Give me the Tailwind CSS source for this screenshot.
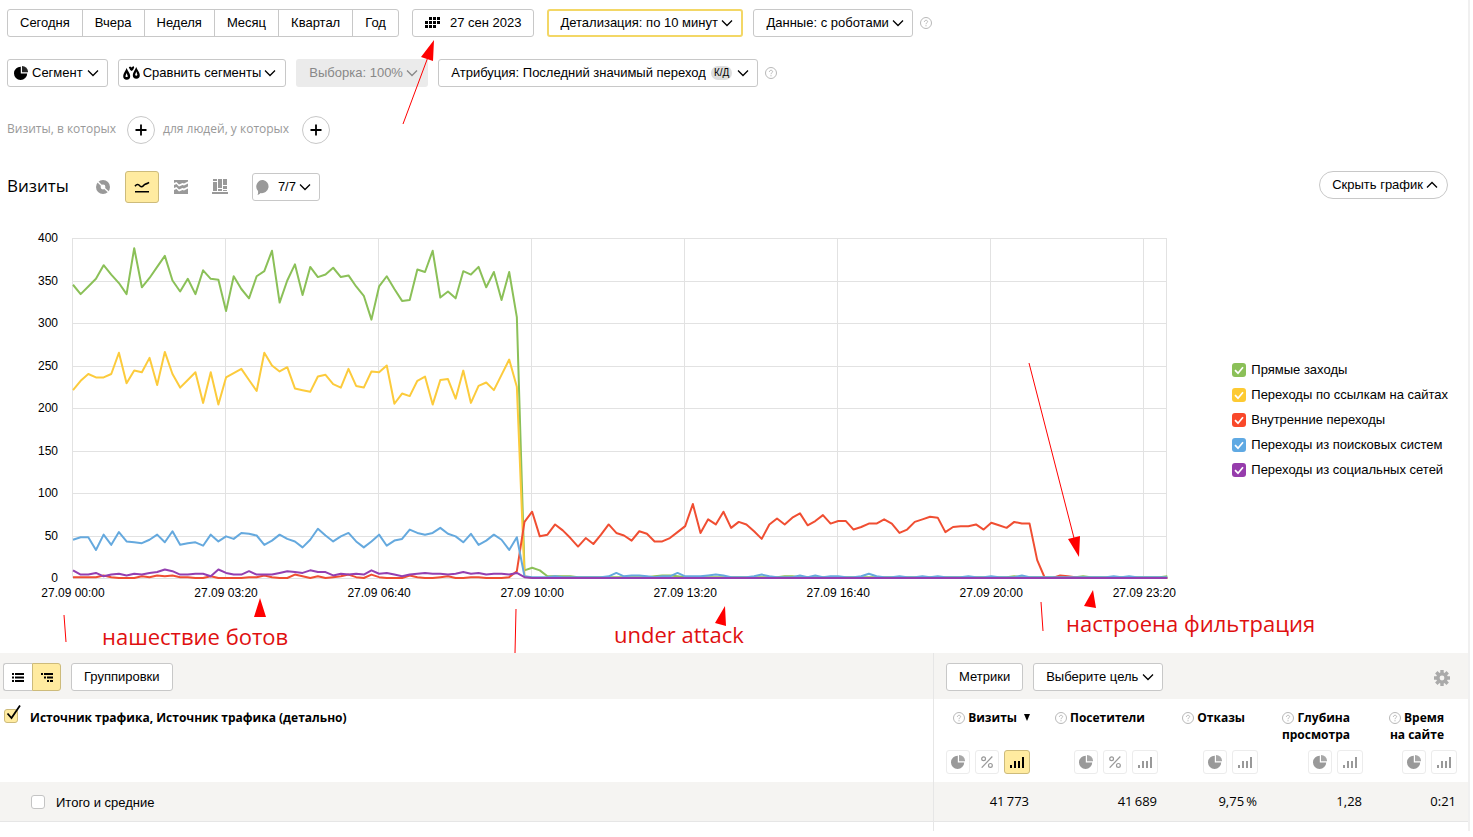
<!DOCTYPE html>
<html lang="ru">

<head>
  <meta charset="UTF-8">
  <meta name="viewport" content="width=device-width, initial-scale=1">
  <title>Источники, сводка</title>
  <script src="https://cdn.jsdelivr.net/npm/@tailwindcss/browser@4"></script>
</head>

<body class="bg-white text-black text-[13px] font-['Liberation_Sans',Arial,sans-serif]">

  <!-- Icons -->
  <svg class="hidden">
    <symbol id="down" viewBox="0 0 12 8">
      <path d="M1 1.5 L6 6.5 L11 1.5" fill="none" stroke="currentColor" stroke-width="1.3" />
    </symbol>
    <symbol id="help" viewBox="0 0 12 12">
      <circle cx="6" cy="6" r="5.5" fill="none" stroke="currentColor" />
      <path d="M4.4 4.9 C4.4 2.8 7.6 2.8 7.6 4.7 C7.6 5.8 6 5.8 6 7.2 M6 8.2 V9.3" fill="none" stroke="currentColor" />
    </symbol>
    <symbol id="pie" viewBox="0 0 14 14">
      <path d="M6.8 0.8 A6.6 6.6 0 1 0 13.2 7.4 H6.8 Z" fill="currentColor" />
      <path d="M8 0 A6 6 0 0 1 14 6.3 H8 Z" fill="currentColor" opacity="0.85" />
    </symbol>
    <symbol id="percent" viewBox="0 0 12 12">
      <g fill="none" stroke="currentColor" stroke-width="1.2">
        <circle cx="2.6" cy="2.8" r="1.9" />
        <circle cx="9.4" cy="9.4" r="1.9" />
        <path d="M11.3 0.5 L0.7 11.7" />
      </g>
    </symbol>
    <symbol id="bars" viewBox="0 0 14 12">
      <path d="M0 9h2v3H0z M4 5h2v7H4z M8 5h2v7H8z M12 1h2v11h-2z" fill="currentColor" />
    </symbol>
    <symbol id="tick" viewBox="0 0 14 14">
      <path d="M3 7.2 L6 10.2 L11 4.2" fill="none" stroke="#fff" stroke-width="1.7" />
    </symbol>
  </svg>

  <div class="relative mr-[3px] border-r-2 border-[#f0f0f0]">

    <!-- Period -->
    <div class="flex items-center pt-[9px] pl-[7px]">
      <div class="flex h-7 rounded-[3px] border border-[#c8c8c8] divide-x divide-[#c8c8c8]">
        <button class="px-3">Сегодня</button>
        <button class="px-3">Вчера</button>
        <button class="px-3">Неделя</button>
        <button class="px-3">Месяц</button>
        <button class="px-3">Квартал</button>
        <button class="px-3">Год</button>
      </div>
      <button class="ml-[13px] flex h-7 items-center gap-[9px] rounded-[3px] border border-[#c8c8c8] px-3">
        <svg class="h-3 w-4" viewBox="0 0 16 12">
          <path d="M4 0h3v3H4z M8 0h3v3H8z M12 0h3v3h-3z M0 4h3v3H0z M4 4h3v3H4z M8 4h3v3H8z M12 4h3v3h-3z M0 8h3v3H0z M4 8h3v3H4z M8 8h3v3H8z" />
        </svg>
        27 сен 2023
      </button>
      <div class="relative ml-[13px]">
        <select aria-label="Детализация" class="block h-7 appearance-none rounded-[3px] border-2 border-[#f3d766] bg-white pr-[23px] pl-[11px]">
          <option>Детализация: по 10 минут</option>
        </select>
        <svg class="pointer-events-none absolute top-[10px] right-[10px] h-2 w-3"><use href="#down" /></svg>
      </div>
      <div class="relative ml-[10px]">
        <select aria-label="Данные" class="block h-7 appearance-none rounded-[3px] border border-[#c8c8c8] bg-white pr-[23px] pl-3">
          <option>Данные: с роботами</option>
        </select>
        <svg class="pointer-events-none absolute top-[10px] right-[9px] h-2 w-3"><use href="#down" /></svg>
      </div>
      <svg class="ml-[7px] h-3 w-3 text-[#b8b8b8]"><use href="#help" /></svg>
    </div>

    <!-- Segments -->
    <div class="mt-[22px] flex items-center pl-[7px]">
      <button class="flex h-7 items-center gap-1 rounded-[3px] border border-[#c8c8c8] pr-2 pl-[6px]">
        <svg class="h-[14px] w-[14px]"><use href="#pie" /></svg>
        Сегмент
        <svg class="h-2 w-3"><use href="#down" /></svg>
      </button>
      <button class="ml-[10px] flex h-7 items-center gap-[3px] rounded-[3px] border border-[#c8c8c8] pr-[9px] pl-1">
        <svg class="h-[14px] w-[17px]" viewBox="0 0 17 14">
          <path d="M3.6 2 C4.4 4.8 7.2 7 7.2 10 A3.5 3.8 0 0 1 0.2 10 C0.2 7 2.8 4.8 3.6 2 Z M13.2 1 C14 3.8 16.8 6 16.8 9 A3.5 3.8 0 0 1 9.8 9 C9.8 6 12.4 3.8 13.2 1 Z M5.8 1.2 L7.2 0.4 L8.6 1.4 L10.4 0 L11.2 1.4 L10 4 L8.6 5 L7.2 4 Z" />
          <path d="M3.6 7 L4.8 10.2 A1.3 1.4 0 0 1 2.4 10.2 Z M13.3 5.4 L14.4 8.8 A1.2 1.4 0 0 1 12.1 8.8 Z" fill="#fff" />
        </svg>
        Сравнить сегменты
        <svg class="h-2 w-3"><use href="#down" /></svg>
      </button>
      <div class="relative ml-[10px]">
        <select aria-label="Выборка" disabled class="block h-7 appearance-none rounded-[3px] bg-[#ebebeb] pr-[25px] pl-[13px] text-[#888] disabled:opacity-100">
          <option>Выборка: 100%</option>
        </select>
        <svg class="pointer-events-none absolute top-[10px] right-[10px] h-2 w-3 text-[#888]"><use href="#down" /></svg>
      </div>
      <div class="relative ml-[10px]">
        <select aria-label="Атрибуция" class="block h-7 appearance-none rounded-[3px] border border-[#c8c8c8] bg-white pr-[51px] pl-3">
          <option>Атрибуция: Последний значимый переход</option>
        </select>
        <div class="pointer-events-none absolute inset-y-0 right-[9px] flex items-center gap-[5px]">
          <span class="rounded-full bg-[#ddd] px-[3px] text-[10px] leading-[14px]">К/Д</span>
          <svg class="h-2 w-3"><use href="#down" /></svg>
        </div>
      </div>
      <svg class="ml-[7px] h-3 w-3 text-[#b8b8b8]"><use href="#help" /></svg>
    </div>

    <!-- Conditions -->
    <div class="mt-[29px] flex items-center pl-[7px] font-['Open_Sans',sans-serif] text-xs text-[#999]">
      <span class="pb-[2px]">Визиты, в которых</span>
      <button aria-label="Добавить условие" class="mr-2 ml-[11px] flex h-7 w-7 items-center justify-center rounded-full border border-[#c8c8c8] text-black">
        <svg class="h-3 w-3" viewBox="0 0 12 12"><path d="M6 0.5V11.5 M0.5 6H11.5" stroke="currentColor" stroke-width="1.8" /></svg>
      </button>
      <span class="pb-[2px]">для людей, у которых</span>
      <button aria-label="Добавить условие для людей" class="ml-[13px] flex h-7 w-7 items-center justify-center rounded-full border border-[#c8c8c8] text-black">
        <svg class="h-3 w-3" viewBox="0 0 12 12"><path d="M6 0.5V11.5 M0.5 6H11.5" stroke="currentColor" stroke-width="1.8" /></svg>
      </button>
    </div>

    <!-- Chart toolbar -->
    <div class="mt-[27px] flex h-8 items-center pr-5 pl-[7px]">
      <h1 class="pb-[2px] font-['Open_Sans',sans-serif] text-[17px] leading-[30px]">Визиты</h1>
      <div class="ml-[17px] flex h-8 items-center gap-[5px] text-[#999]">
        <button aria-label="Круговая диаграмма" class="flex h-8 w-[34px] items-center justify-center">
          <svg class="h-[14px] w-[14px]" viewBox="0 0 14 14">
            <circle cx="7" cy="7" r="7" fill="currentColor" />
            <circle cx="7" cy="7" r="2.4" fill="#fff" />
            <path d="M7 7 L1.5 1.5 M7 7 L12.5 12" stroke="#fff" stroke-width="1.4" />
          </svg>
        </button>
        <button aria-label="Линии" class="flex h-8 w-[34px] items-center justify-center rounded-[3px] border border-[#cdbb7b] bg-[#ffeba0] text-black">
          <svg class="h-3 w-4" viewBox="0 0 16 12">
            <path d="M1 5.2 C3 2.6 4.6 3.4 6 5 C7.6 6.6 9 5.4 10.5 3.6 C11.8 2.6 13 3.2 15 1.4 M1 10.7 H15" fill="none" stroke="currentColor" stroke-width="1.6" />
          </svg>
        </button>
        <button aria-label="Области" class="flex h-8 w-[34px] items-center justify-center">
          <svg class="h-[14px] w-[14px]" viewBox="0 0 14 14" fill="currentColor">
            <path d="M0 0H14V1.5L10 3.5L8.5 3L5 4.5L2.5 2L0 3Z" />
            <path d="M0 5L2.5 4L5 6.5L8.5 5L10 5.5L14 3.5V6.5L10 8.5L8.5 8L5 9.5L2.5 7L0 8Z" />
            <path d="M0 10L2.5 9L5 11.5L8.5 10L10 10.5L14 8.5V14H0Z" />
          </svg>
        </button>
        <button aria-label="Колонки" class="flex h-8 w-[34px] items-center justify-center">
          <svg class="h-4 w-4" viewBox="0 0 16 16" fill="currentColor">
            <path d="M1 0h4v2H1z M1 3h4v9H1z M6 0h4v9H6z M6 10h4v2H6z M11 0h4v6h-4z M11 7h4v3h-4z M11 11h4v1h-4z M0 13h16v2H0z" />
          </svg>
        </button>
      </div>
      <div class="relative ml-[15px]">
        <select aria-label="Линии графика" class="block h-7 appearance-none rounded-[3px] border border-[#c8c8c8] bg-white pr-[22px] pl-[25px]">
          <option>7/7</option>
        </select>
        <svg class="pointer-events-none absolute top-[7px] left-1 h-[15px] w-[14px]" viewBox="0 0 14 15">
          <path d="M7.2 0 A6.6 6.6 0 1 1 4.6 13 C3.8 14 2.4 14.8 1.4 14.8 C2.2 13.8 2.2 12.4 2 11 A6.6 6.6 0 0 1 7.2 0 Z" fill="#999" />
        </svg>
        <svg class="pointer-events-none absolute top-[10px] right-[9px] h-2 w-3"><use href="#down" /></svg>
      </div>
      <button class="mb-1 ml-auto flex h-7 items-center gap-[3px] rounded-full border border-[#c8c8c8] pr-[9px] pl-3">
        Скрыть график
        <svg class="h-2 w-3 rotate-180"><use href="#down" /></svg>
      </button>
    </div>

    <!-- Chart -->
    <div class="flex h-[450px] pt-[35px] pr-5 pl-[73px]">
      <div class="min-w-0 flex-1">
        <svg class="block h-[341px] w-full overflow-visible text-xs" role="img" aria-label="Визиты по источникам трафика">
          <g id="grid" stroke="#e2e2e2" shape-rendering="crispEdges" transform="translate(-0.5 0)"></g>
          <g id="labels"></g>
          <svg id="lines" class="overflow-visible" width="100%" height="341" viewBox="0 0 143 341" preserveAspectRatio="none"></svg>
        </svg>
      </div>
      <ul class="mt-[122px] ml-[65px] flex shrink-0 flex-col gap-[5px]">
        <li><label class="flex h-5 items-center gap-[5px]">
          <span class="grid"><input type="checkbox" checked class="col-start-1 row-start-1 h-[14px] w-[14px] appearance-none rounded-[3px] bg-[#8bc058]"><svg class="pointer-events-none col-start-1 row-start-1 h-[14px] w-[14px]"><use href="#tick" /></svg></span>
          <span class="leading-5">Прямые заходы</span></label></li>
        <li><label class="flex h-5 items-center gap-[5px]">
          <span class="grid"><input type="checkbox" checked class="col-start-1 row-start-1 h-[14px] w-[14px] appearance-none rounded-[3px] bg-[#fdca32]"><svg class="pointer-events-none col-start-1 row-start-1 h-[14px] w-[14px]"><use href="#tick" /></svg></span>
          <span class="leading-5">Переходы по ссылкам на сайтах</span></label></li>
        <li><label class="flex h-5 items-center gap-[5px]">
          <span class="grid"><input type="checkbox" checked class="col-start-1 row-start-1 h-[14px] w-[14px] appearance-none rounded-[3px] bg-[#f9482a]"><svg class="pointer-events-none col-start-1 row-start-1 h-[14px] w-[14px]"><use href="#tick" /></svg></span>
          <span class="leading-5">Внутренние переходы</span></label></li>
        <li><label class="flex h-5 items-center gap-[5px]">
          <span class="grid"><input type="checkbox" checked class="col-start-1 row-start-1 h-[14px] w-[14px] appearance-none rounded-[3px] bg-[#5fa9e3]"><svg class="pointer-events-none col-start-1 row-start-1 h-[14px] w-[14px]"><use href="#tick" /></svg></span>
          <span class="leading-5">Переходы из поисковых систем</span></label></li>
        <li><label class="flex h-5 items-center gap-[5px]">
          <span class="grid"><input type="checkbox" checked class="col-start-1 row-start-1 h-[14px] w-[14px] appearance-none rounded-[3px] bg-[#963cac]"><svg class="pointer-events-none col-start-1 row-start-1 h-[14px] w-[14px]"><use href="#tick" /></svg></span>
          <span class="leading-5">Переходы из социальных сетей</span></label></li>
      </ul>
    </div>

    <!-- Table toolbar -->
    <div class="flex h-[46px] bg-[#f5f4f2]">
      <div class="flex flex-1 items-start pt-[10px] pl-[3px]">
        <div class="flex h-7">
          <button aria-label="Список" class="flex w-[29px] items-center justify-center rounded-l-[3px] border border-r-0 border-[#c8c8c8] bg-white">
            <svg class="h-[9px] w-3" viewBox="0 0 12 9"><path d="M0 0h2v2H0z M3 0h9v2H3z M0 3.5h2v2H0z M3 3.5h9v2H3z M0 7h2v2H0z M3 7h9v2H3z" /></svg>
          </button>
          <button aria-label="Дерево" class="flex w-[29px] items-center justify-center rounded-r-[3px] border border-[#cdbb7b] bg-[#ffeba0]">
            <svg class="h-[9px] w-3" viewBox="0 0 12 9"><path d="M0 0h2v2H0z M3 0h9v2H3z M3 3.5h2v2H3z M6 3.5h6v2H6z M6 7h2v2H6z M9 7h3v2H9z" /></svg>
          </button>
        </div>
        <button class="ml-[10px] h-7 rounded-[3px] border border-[#c8c8c8] bg-white px-3">Группировки</button>
      </div>
      <div class="flex w-[535px] items-start border-l border-[#e6e6e6] pt-[10px] pr-[18px] pl-3">
        <button class="h-7 rounded-[3px] border border-[#c8c8c8] bg-white px-3">Метрики</button>
        <div class="relative ml-[10px]">
          <select aria-label="Цель" class="block h-7 appearance-none rounded-[3px] border border-[#c8c8c8] bg-white pr-[23px] pl-3">
            <option>Выберите цель</option>
          </select>
          <svg class="pointer-events-none absolute top-[10px] right-[9px] h-2 w-3"><use href="#down" /></svg>
        </div>
        <button aria-label="Настройки" class="mt-[7px] ml-auto">
          <svg class="h-4 w-4" viewBox="0 0 16 16">
            <g stroke="#aaa" stroke-width="3.4">
              <path d="M8 0V16 M0 8H16 M2.3 2.3L13.7 13.7 M13.7 2.3L2.3 13.7" />
            </g>
            <circle cx="8" cy="8" r="5.8" fill="#aaa" />
            <circle cx="8" cy="8" r="2.4" fill="#f5f4f2" />
          </svg>
        </button>
      </div>
    </div>

    <!-- Table -->
    <table class="w-full table-fixed border-collapse font-['Open_Sans',sans-serif]">
      <colgroup>
        <col>
        <col class="w-[97px]">
        <col class="w-[128px]">
        <col class="w-[100px]">
        <col class="w-[105px]">
        <col class="w-[105px]">
      </colgroup>
      <thead>
        <tr class="h-[83px] align-top text-xs leading-[17px] font-bold">
          <th class="pt-[10px] text-left">
            <label class="flex items-start pl-1">
              <span class="grid">
                <input type="checkbox" checked class="col-start-1 row-start-1 h-[14px] w-[14px] appearance-none rounded-[3px] border border-[#cdbb7b] bg-[#ffeba0]">
                <svg class="pointer-events-none col-start-1 row-start-1 h-[14px] w-[14px] overflow-visible" viewBox="0 0 14 14"><path d="M3.5 4.5 L7.5 9 L16 -3.5" fill="none" stroke="#000" stroke-width="1.8" /></svg>
              </span>
              <span class="ml-3">Источник трафика, Источник трафика (детально)</span>
            </label>
          </th>
          <th class="border-l border-[#e6e6e6] pt-[10px]">
            <div class="flex h-[41px] items-start justify-end gap-[3px] text-right">
              <svg class="mt-[3px] h-3 w-3 text-[#b8b8b8]"><use href="#help" /></svg>Визиты
              <svg class="mt-[5px] ml-1 h-[7px] w-[6px]" viewBox="0 0 6 7"><path d="M0 0H6L3 7Z" /></svg>
            </div>
            <div class="flex justify-end gap-[5px] text-[#999]">
              <button aria-label="Круговая" class="flex h-6 w-6 items-center justify-center rounded-[3px] border border-[#ececec]"><svg class="h-[14px] w-[14px]"><use href="#pie" /></svg></button>
              <button aria-label="Проценты" class="flex h-6 w-6 items-center justify-center rounded-[3px] border border-[#ececec]"><svg class="h-3 w-3"><use href="#percent" /></svg></button>
              <button aria-label="Столбцы" class="flex h-6 w-[26px] items-center justify-center rounded-[3px] border border-[#cdbb7b] bg-[#ffeba0] text-black"><svg class="h-3 w-[14px]"><use href="#bars" /></svg></button>
            </div>
          </th>
          <th class="pt-[10px]">
            <div class="flex h-[41px] items-start justify-end gap-[3px] pr-[13px] text-right">
              <svg class="mt-[3px] h-3 w-3 text-[#b8b8b8]"><use href="#help" /></svg>Посетители
            </div>
            <div class="flex justify-end gap-[5px] text-[#999]">
              <button aria-label="Круговая" class="flex h-6 w-6 items-center justify-center rounded-[3px] border border-[#ececec]"><svg class="h-[14px] w-[14px]"><use href="#pie" /></svg></button>
              <button aria-label="Проценты" class="flex h-6 w-6 items-center justify-center rounded-[3px] border border-[#ececec]"><svg class="h-3 w-3"><use href="#percent" /></svg></button>
              <button aria-label="Столбцы" class="flex h-6 w-[26px] items-center justify-center rounded-[3px] border border-[#ececec]"><svg class="h-3 w-[14px]"><use href="#bars" /></svg></button>
            </div>
          </th>
          <th class="pt-[10px]">
            <div class="flex h-[41px] items-start justify-end gap-[3px] pr-[13px] text-right">
              <svg class="mt-[3px] h-3 w-3 text-[#b8b8b8]"><use href="#help" /></svg>Отказы
            </div>
            <div class="flex justify-end gap-[5px] text-[#999]">
              <button aria-label="Круговая" class="flex h-6 w-6 items-center justify-center rounded-[3px] border border-[#ececec]"><svg class="h-[14px] w-[14px]"><use href="#pie" /></svg></button>
              <button aria-label="Столбцы" class="flex h-6 w-[26px] items-center justify-center rounded-[3px] border border-[#ececec]"><svg class="h-3 w-[14px]"><use href="#bars" /></svg></button>
            </div>
          </th>
          <th class="pt-[10px]">
            <div class="h-[41px] pr-[13px] text-right">
              <span class="flex justify-end gap-[3px]"><svg class="mt-[3px] h-3 w-3 text-[#b8b8b8]"><use href="#help" /></svg>Глубина</span>
              просмотра
            </div>
            <div class="flex justify-end gap-[5px] text-[#999]">
              <button aria-label="Круговая" class="flex h-6 w-6 items-center justify-center rounded-[3px] border border-[#ececec]"><svg class="h-[14px] w-[14px]"><use href="#pie" /></svg></button>
              <button aria-label="Столбцы" class="flex h-6 w-[26px] items-center justify-center rounded-[3px] border border-[#ececec]"><svg class="h-3 w-[14px]"><use href="#bars" /></svg></button>
            </div>
          </th>
          <th class="pt-[10px] pr-[11px]">
            <div class="h-[41px] pr-[13px] text-right">
              <span class="flex justify-end gap-[3px]"><svg class="mt-[3px] h-3 w-3 text-[#b8b8b8]"><use href="#help" /></svg>Время</span>
              на сайте
            </div>
            <div class="flex justify-end gap-[5px] text-[#999]">
              <button aria-label="Круговая" class="flex h-6 w-6 items-center justify-center rounded-[3px] border border-[#ececec]"><svg class="h-[14px] w-[14px]"><use href="#pie" /></svg></button>
              <button aria-label="Столбцы" class="flex h-6 w-[26px] items-center justify-center rounded-[3px] border border-[#ececec]"><svg class="h-3 w-[14px]"><use href="#bars" /></svg></button>
            </div>
          </th>
        </tr>
      </thead>
      <tbody>
        <tr class="h-[39px] border-b border-[#e6e6e6] bg-[#f5f4f2] text-right">
          <td class="pt-[2px] text-left font-['Liberation_Sans',Arial,sans-serif]">
            <label class="flex items-center gap-[11px] pl-[31px]">
              <input type="checkbox" class="h-[14px] w-[14px] appearance-none rounded-[3px] border border-[#c4c4c4] bg-white">
              Итого и средние
            </label>
          </td>
          <td class="border-l border-[#e6e6e6] pr-[1px]">41&thinsp;773</td>
          <td class="pr-[1px]">41&thinsp;689</td>
          <td class="pr-[1px]">9,75&thinsp;%</td>
          <td class="pr-[1px]">1,28</td>
          <td class="pr-3">0:21</td>
        </tr>
        <tr class="h-[10px]">
          <td></td>
          <td class="border-l border-[#e6e6e6]"></td>
          <td colspan="4"></td>
        </tr>
      </tbody>
    </table>

    <!-- Notes drawn over the report -->
    <svg class="pointer-events-none absolute inset-0 h-full w-full font-['Open_Sans',sans-serif] text-[22px]">
      <g fill="none" stroke="#f00">
        <path d="M403 124L428 57 M1029 363L1074 538" />
        <path d="M64 615L66 642 M516 609L515 653 M1041 602L1043 631" />
      </g>
      <g fill="#f00">
        <path d="M434 40L421 57L433 61Z M1079 557L1068 539L1080 536Z" />
        <path d="M260 598L254 617L266 617Z M725 606L715 623L726 626Z M1093 590L1084 606L1096 608Z" />
      </g>
      <g fill="#e01010">
        <text x="102" y="645">нашествие ботов</text>
        <text x="614" y="643">under attack</text>
        <text x="1066" y="632">настроена фильтрация</text>
      </g>
    </svg>
  </div>

  <script>
    // Visits per 10 minutes, 144 points a day. Missing tail values count as zero
    const series = [
      {
        color: '#8bc058',
        data: [345, 334, 343, 352, 368, 357, 347, 334, 388, 342, 353, 366, 379, 350, 337, 352, 334, 362, 352, 351, 314, 355, 340, 329, 355, 361, 385, 324, 350, 369,
          333, 366, 354, 357, 365, 354, 356, 343, 332, 304, 343, 355, 340, 326, 327, 363, 360, 385, 330, 337, 329, 361, 357, 366, 342, 360, 327, 360, 307, 9,
          12, 9, 2, 2, 2, 2, 1, 1, 1, 1, 1, 1, 1, 1, 1, 1, 2, 3, 3, 2, 1, 1, 1, 1, 1, 1, 1, 1, 1, 1,
          1, 1, 1, 2, 2, 1, 1, 1, 1, 1, 1, 1, 1, 1, 1, 1, 1, 1, 1, 1, 1, 1, 1, 1, 1, 1, 1, 1, 1, 1,
          1, 1, 1, 2, 1, 1, 1, 1, 1, 1, 1, 1, 2, 1, 1, 1, 1, 1, 1, 1, 1, 1, 1, 2]
      },
      {
        color: '#fccb3c',
        data: [221, 232, 240, 236, 236, 240, 265, 229, 244, 242, 259, 227, 266, 240, 224, 233, 242, 206, 242, 204, 236, 241, 246, 233, 220, 265, 250, 243, 248, 223,
          221, 219, 237, 239, 228, 224, 246, 226, 224, 243, 242, 250, 205, 217, 214, 232, 237, 204, 233, 234, 211, 244, 206, 226, 230, 221, 239, 257, 225, 2]
      },
      {
        color: '#f04e32',
        data: [1, 1, 1, 1, 3, 1, 0, 0, 0, 2, 1, 3, 2, 3, 1, 1, 0, 0, 2, 0, 0, 0, 0, 1, 1, 3, 1, 0, 0, 4,
          2, 0, 2, 0, 1, 2, 4, 1, 0, 4, 1, 0, 0, 0, 3, 1, 0, 0, 1, 2, 0, 0, 1, 1, 0, 0, 0, 1, 8, 66,
          78, 49, 51, 63, 56, 47, 37, 47, 40, 51, 63, 53, 50, 44, 55, 52, 43, 43, 47, 54, 61, 87, 53, 69, 63, 78, 59, 66, 63, 55,
          46, 63, 70, 63, 71, 76, 62, 67, 74, 64, 67, 67, 57, 60, 64, 64, 69, 64, 53, 57, 66, 69, 72, 71, 54, 60, 61, 61, 63, 57,
          65, 62, 59, 66, 64, 64, 21, 0, 0, 3, 2, 1]
      },
      {
        color: '#65a9de',
        data: [45, 48, 48, 33, 51, 39, 54, 43, 42, 41, 45, 51, 42, 55, 39, 41, 42, 38, 51, 43, 49, 46, 53, 52, 50, 39, 44, 51, 46, 43,
          36, 45, 58, 50, 43, 49, 53, 43, 36, 43, 51, 38, 44, 46, 57, 53, 51, 53, 59, 52, 49, 42, 52, 39, 44, 51, 45, 33, 48, 2,
          1, 1, 1, 2, 1, 1, 1, 1, 1, 1, 2, 6, 2, 3, 3, 2, 1, 2, 2, 6, 2, 2, 2, 3, 4, 3, 1, 1, 1, 2,
          4, 2, 1, 1, 1, 3, 1, 3, 1, 2, 2, 1, 1, 2, 5, 2, 1, 1, 2, 1, 1, 2, 1, 2, 1, 1, 1, 2, 1, 1,
          2, 1, 1, 1, 3, 1, 1, 1, 1, 1, 1, 1, 1, 1, 1, 1, 2, 1, 2, 1, 1, 1, 1, 1]
      },
      {
        color: '#943fb0',
        data: [9, 4, 4, 6, 2, 4, 5, 3, 5, 4, 6, 7, 10, 8, 4, 4, 5, 5, 2, 10, 6, 4, 4, 8, 4, 4, 4, 6, 8, 7,
          6, 9, 7, 7, 3, 5, 4, 5, 4, 9, 5, 6, 4, 2, 4, 5, 6, 5, 5, 4, 5, 7, 5, 6, 4, 5, 5, 4, 6, 1]
      }
    ];

    const NS = 'http://www.w3.org/2000/svg';
    const last = 143;
    const height = 340;

    function add(parent, name, attrs, text) {
      const el = document.createElementNS(NS, name);
      Object.entries(attrs).forEach(([key, value]) => el.setAttribute(key, value));
      if (text !== undefined) el.textContent = text;
      document.getElementById(parent).appendChild(el);
    }

    // Horizontal grid and values
    for (let value = 0; value <= 400; value += 50) {
      const y = Math.round(height - value * height / 400);
      add('grid', 'line', { x1: 0, x2: '100%', y1: y, y2: y });
      add('labels', 'text', { x: -15, y: y + 4, 'text-anchor': 'end' }, value);
    }

    // Vertical grid and time
    const times = ['00:00', '03:20', '06:40', '10:00', '13:20', '16:40', '20:00', '23:20'];
    times.forEach((time, i) => {
      const x = i * 20 / last * 100 + '%';
      add('grid', 'line', { x1: x, x2: x, y1: 0, y2: height });
      add('labels', 'text', { x: x, y: height + 19, 'text-anchor': 'middle' }, '27.09 ' + time);
    });
    add('grid', 'line', { x1: '100%', x2: '100%', y1: 0, y2: height });

    series.forEach(({ color, data }) => {
      const points = [];
      for (let i = 0; i <= last; i++) {
        const value = i < data.length ? data[i] : 0;
        points.push(i + ',' + (height - value * height / 400));
      }
      add('lines', 'polyline', {
        points: points.join(' '), fill: 'none', stroke: color, 'stroke-width': 2,
        'stroke-linejoin': 'round', 'vector-effect': 'non-scaling-stroke'
      });
    });
  </script>
</body>

</html>
